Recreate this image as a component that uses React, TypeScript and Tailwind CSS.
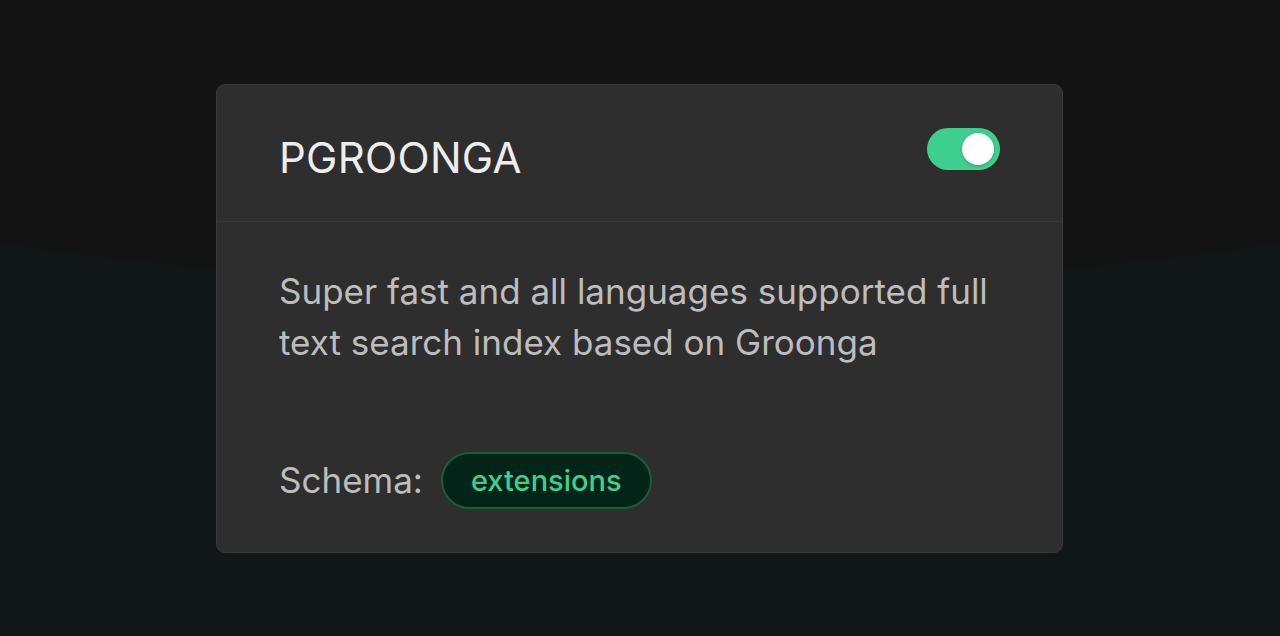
export default function App() {
  return (
    <div className="min-h-[636px] w-full bg-[#111616] bg-[radial-gradient(ellipse_1217px_288px_at_50%_0%,#131313_99%,transparent_100%)] pt-[84px] font-['Inter',sans-serif]">
      <div className="ml-[216px] w-[847px] rounded-[9px] border border-[#3a3a3a] bg-[#2e2e2e]">
        {/* Header */}
        <div className="flex h-[137px] items-center justify-between border-b border-[#383838] pl-[62px] pr-[62px]">
          <h1 className="mt-[8px] text-[42px] font-normal tracking-[0.3px] text-[#ededed]">PGROONGA</h1>
          <button className="mb-[8px] flex h-[42px] w-[73px] items-center justify-end rounded-full bg-[#3ecf8e] pr-[6px]">
            <span className="h-[32px] w-[32px] rounded-full bg-white shadow-[0_1px_3px_rgba(0,0,0,0.25)]" />
          </button>
        </div>

        {/* Body */}
        <div className="pl-[62px] pr-[40px] pt-[44px] pb-[43px]">
          <p className="text-[35px] leading-[51px] text-[#bdbdbd]">
            Super fast and all languages supported full text search index based on Groonga
          </p>
          <div className="mt-[84px] flex items-center gap-[18px]">
            <span className="text-[35px] text-[#bdbdbd]">Schema:</span>
            <span className="flex h-[57px] items-center rounded-full border-2 border-[#185e3e] bg-[#032418] px-[28px] text-[29px] font-medium text-[#3ecf8e]">
              extensions
            </span>
          </div>
        </div>
      </div>
    </div>
  );
}
